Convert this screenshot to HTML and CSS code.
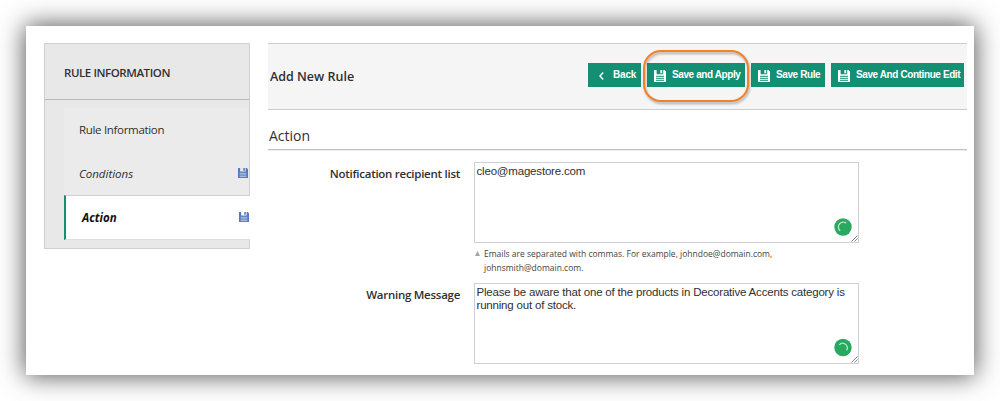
FILE: index.html
```html
<!DOCTYPE html>
<html lang="en">
<head>
<meta charset="utf-8">
<title>Add New Rule</title>
<link rel="stylesheet" href="styles.css">
</head>
<body>
<svg class="defs" width="0" height="0" aria-hidden="true">
  <symbol id="floppy" viewBox="0 0 12 12">
    <path fill="currentColor" d="M0 0H2.6V4.2H9.2V0H10.6L12 1.4V12H0Z"/>
    <path fill="currentColor" d="M6.3 0H8.2V3.3H6.3Z"/>
    <path class="floppy-lines" d="M2 6.3H10M2 8.3H10M2 10.3H10"/>
  </symbol>
</svg>
<div class="panel">
  <aside class="sidebar">
    <h2 class="sidebar-title">RULE INFORMATION</h2>
    <nav class="tabs">
      <a class="tab tab-first">Rule Information</a>
      <a class="tab tab-changed">Conditions<svg class="tab-icon"><use href="#floppy"/></svg></a>
      <a class="tab tab-active">Action<svg class="tab-icon"><use href="#floppy"/></svg></a>
    </nav>
  </aside>
  <main class="main">
    <header class="toolbar">
      <h1 class="page-title">Add New Rule</h1>
      <div class="buttons">
        <button class="btn btn-back"><svg class="chevron" viewBox="0 0 5 8"><path d="M4.2 .6L1 4L4.2 7.4"/></svg><span>Back</span></button>
        <button class="btn btn-apply"><svg class="btn-icon"><use href="#floppy"/></svg><span>Save and Apply</span><i class="highlight"></i></button>
        <button class="btn btn-save"><svg class="btn-icon"><use href="#floppy"/></svg><span>Save Rule</span></button>
        <button class="btn btn-continue"><svg class="btn-icon"><use href="#floppy"/></svg><span>Save And Continue Edit</span></button>
      </div>
    </header>
    <h2 class="section-title">Action</h2>
    <div class="field">
      <label class="label">Notification recipient list</label>
      <div class="control">
        <div class="box"><span>cleo@magestore.com</span>
          <svg class="spinner" viewBox="0 0 18 18"><circle cx="9" cy="9" r="8.7"/><path d="M6.2 12.8A4.6 4.6 0 0 1 12.2 5.2"/></svg>
          <svg class="grip" viewBox="0 0 7 7"><path d="M.5 6.5L6.5 .5M3.5 6.5L6.5 3.5"/></svg>
        </div>
        <p class="note"><svg class="marker" viewBox="0 0 5 5"><path d="M0 5L2.5 0L5 5Z"/></svg><span>Emails are separated with commas. For example, johndoe@domain.com,<br>johnsmith@domain.com.</span></p>
      </div>
    </div>
    <div class="field">
      <label class="label">Warning Message</label>
      <div class="control">
        <div class="box"><span>Please be aware that one of the products in Decorative Accents category is<br>running out of stock.</span>
          <svg class="spinner" viewBox="0 0 18 18"><circle cx="9" cy="8.5" r="8.7"/><path d="M5.2 5.9A4.6 4.6 0 0 1 12.6 11.3"/></svg>
          <svg class="grip" viewBox="0 0 7 7"><path d="M.5 6.5L6.5 .5M3.5 6.5L6.5 3.5"/></svg>
        </div>
      </div>
    </div>
  </main>
</div>
</body>
</html>
```
FILE: styles.css
```css
* { box-sizing: border-box; }
body {
  margin: 0;
  padding: 26px;
  height: 401px;
  overflow: hidden;
  background: #fff;
  color: #303030;
  font-family: "Open Sans", sans-serif;
}
.defs { position: absolute; }
h1, h2, p { margin: 0; font-weight: 400; }
.floppy-lines { fill: none; stroke: var(--floppy-line); stroke-width: 1; }
.panel {
  display: flex;
  gap: 18px;
  width: 948px;
  height: 349px;
  padding: 17px 7px 0 18px;
  background: #fff;
  box-shadow: 0 0 24px 1px rgba(0, 0, 0, .68);
}
.sidebar {
  width: 206px;
  height: 206px;
  background: #e8e8e8;
  border: 1px solid #cdd0d4;
}
.sidebar-title {
  height: 56px;
  padding-left: 19px;
  border-bottom: 1px solid #b9b9b9;
  line-height: 57px;
  font-size: 11.5px;
  letter-spacing: -.43px;
  font-weight: 600;
  white-space: nowrap;
}
.tabs {
  display: flex;
  flex-direction: column;
  margin: 8px 0 0 19px;
}
.tab {
  position: relative;
  display: block;
  height: 44px;
  padding-left: 15px;
  line-height: 44px;
  font-size: 11.5px;
  letter-spacing: -.32px;
  background: #ebebeb;
}
.tab-changed { height: 43px; line-height: 43px; letter-spacing: 0; font-style: italic; }
.tab-active {
  height: 45px;
  margin-right: -1px;
  padding-left: 16px;
  border-left: 2px solid #13906f;
  border-top: 1px solid #cdd0d4;
  border-bottom: 1px solid #dcdee1;
  line-height: 43px;
  letter-spacing: 0;
  background: #fff;
  color: #111;
  font-weight: 700;
  font-style: italic;
}
.tab-icon {
  position: absolute;
  right: 1px;
  top: 16px;
  width: 10px;
  height: 10px;
  color: #5579bf;
  --floppy-line: #c3d1ed;
}
.main { width: 699px; }
.toolbar {
  display: flex;
  align-items: center;
  justify-content: space-between;
  height: 67px;
  padding: 0 3px 4px 2px;
  background: #f5f5f5;
  border-top: 1px solid #cbcbcb;
  border-bottom: 1px solid #cbcbcb;
}
.page-title { font-size: 12.5px; font-weight: 600; white-space: nowrap; padding-top: 3px; }
.buttons { display: flex; gap: 6px; }
.btn {
  position: relative;
  display: flex;
  align-items: center;
  height: 24px;
  padding: 0 0 0 7px;
  border: 0;
  background: #158f74;
  color: #fff;
  font: 700 10px/24px "Liberation Sans", Arial, sans-serif;
  letter-spacing: -.4px;
  white-space: nowrap;
}
.btn-back { width: 53px; padding-left: 11px; gap: 9px; letter-spacing: -.2px; }
.btn-apply { width: 98px; }
.btn-save { width: 74px; }
.btn-continue { width: 133px; }
.btn-icon {
  width: 12px;
  height: 12px;
  margin: 2px 6px 0 0;
  flex: none;
  --floppy-line: #158f74;
}
.chevron { width: 5px; height: 8px; margin-top: 2px; fill: none; stroke: #fff; stroke-width: 1.4; }
.highlight {
  position: absolute;
  left: -4px;
  top: -13px;
  width: 106px;
  height: 52px;
  border: 2px solid #f2812a;
  border-radius: 18px;
  filter: drop-shadow(1px 2px 1px rgba(0, 0, 0, .3));
  z-index: 1;
}
.section-title {
  height: 40px;
  padding: 13px 0 0 1px;
  border-bottom: 1px solid #c0c0c0;
  box-shadow: 0 1px #eee;
  font-size: 14px;
  line-height: 26px;
}
.field { display: flex; gap: 14px; padding-top: 12px; }
.field + .field { padding-top: 8px; }
.label {
  width: 192px;
  text-align: right;
  font-size: 11.5px;
  letter-spacing: -.27px;
  line-height: 23px;
  font-weight: 600;
  white-space: nowrap;
}
.control { width: 385px; }
.box {
  position: relative;
  height: 81px;
  padding: 2px 1.5px;
  border: 1px solid #cdd0d8;
  font: 11.5px/13px "Liberation Sans", Arial, sans-serif;
  letter-spacing: -.19px;
  white-space: nowrap;
}
.spinner { position: absolute; right: 6px; bottom: 6px; width: 18px; height: 18px; overflow: visible; }
.spinner circle { fill: #28a960; }
.spinner path { fill: none; stroke: #b4e5c8; stroke-width: 1.3; }
.grip { position: absolute; right: 0; bottom: 0; width: 7px; height: 7px; fill: none; stroke: #777; stroke-width: .9; }
.note {
  display: flex;
  gap: 4px;
  height: 32px;
  padding: 4px 0 0 1px;
  font-size: 8.5px;
  line-height: 14px;
  color: #444;
  white-space: nowrap;
}
.marker { flex: none; width: 5px; height: 5px; margin-top: 4px; fill: #9aa8ae; }
```
